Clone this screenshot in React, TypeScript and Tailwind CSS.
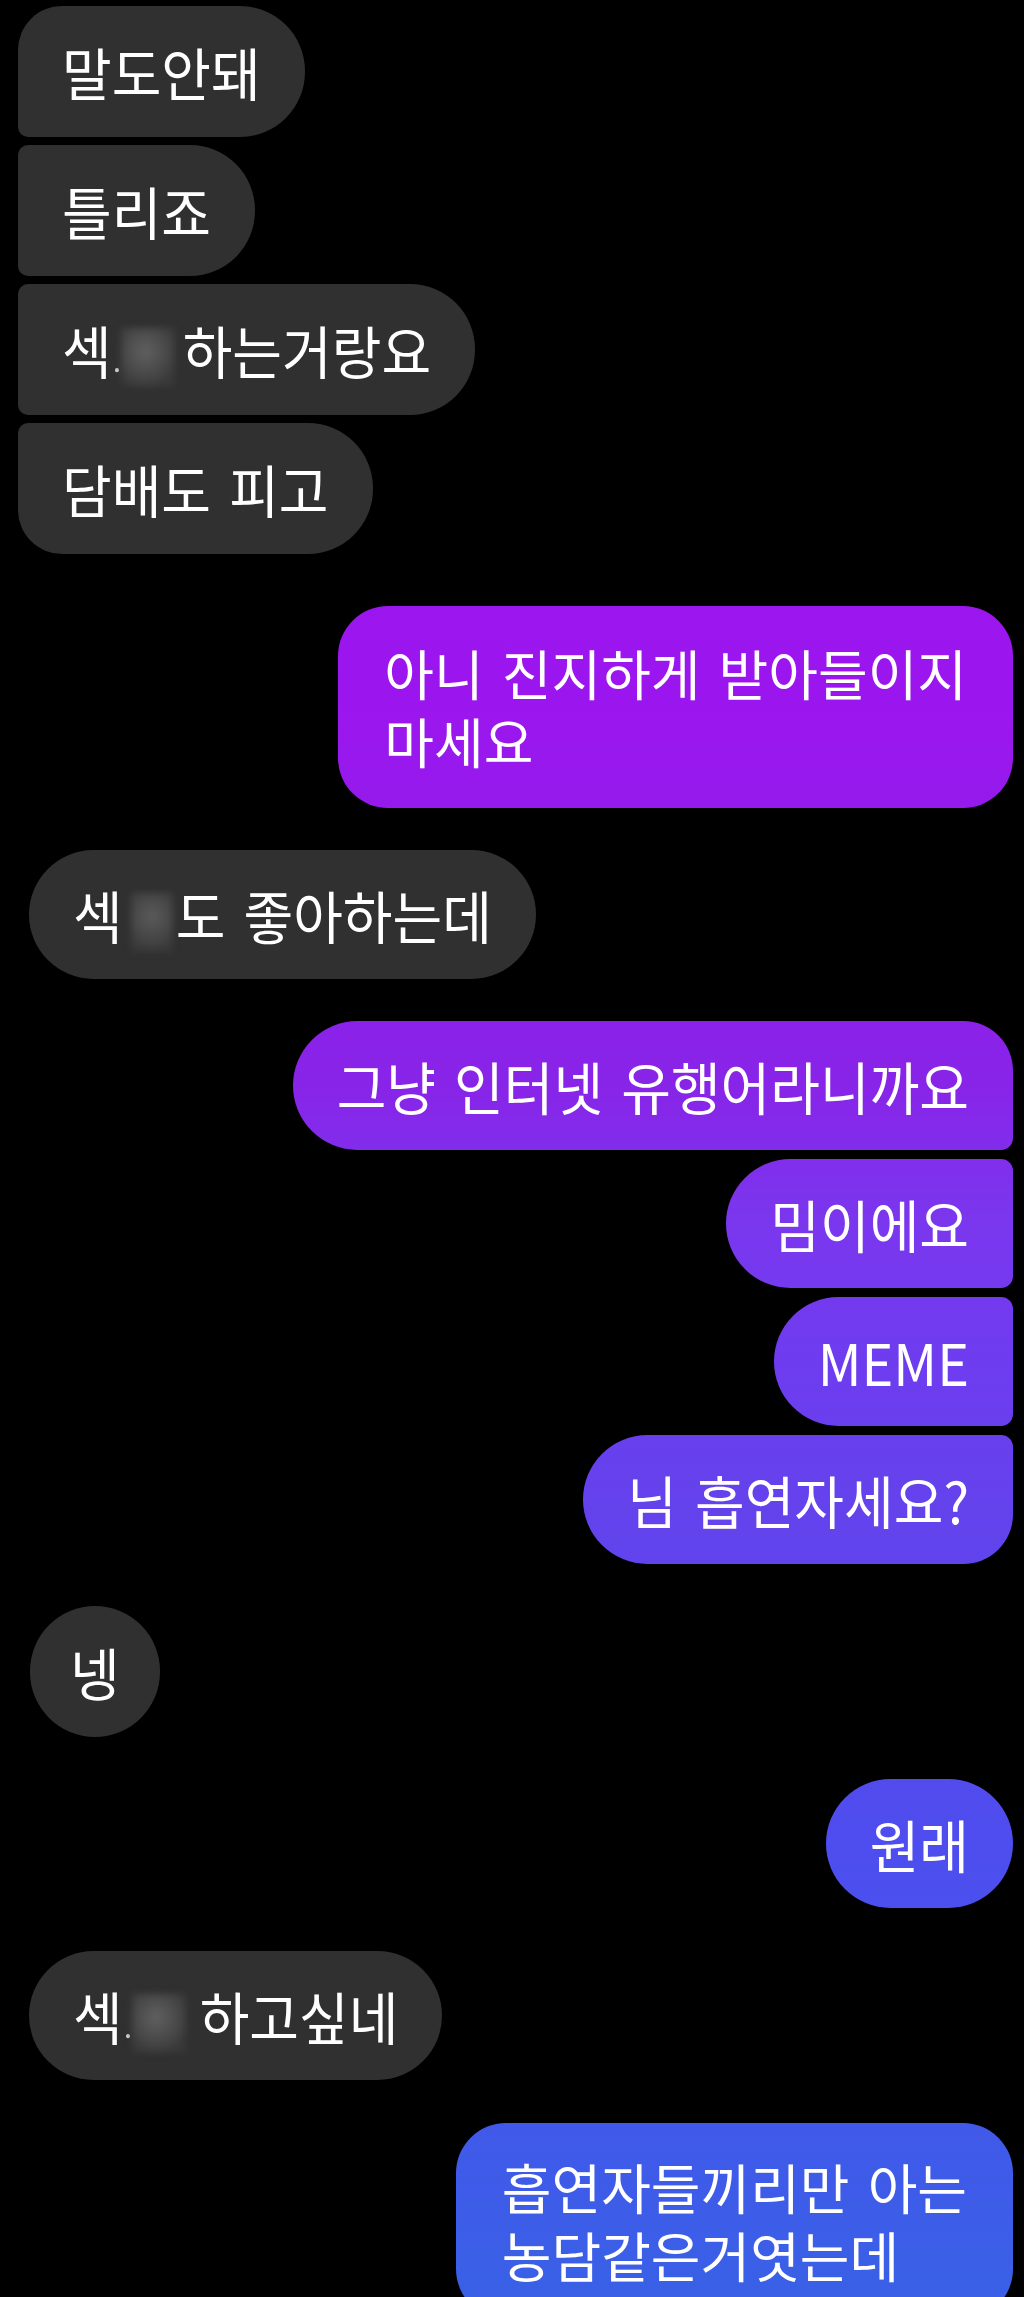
import React from "react";

const sent =
  "bg-fixed bg-[linear-gradient(180deg,#a012f0_0px,#9b16ee_700px,#8824e8_1085px,#7a37ee_1225px,#6e3cef_1360px,#6442ec_1500px,#4e4def_1842px,#3d5ce8_2200px,#3a60e7_2297px)]";

function Dot() {
  return <span className="inline-block w-[4px] h-[4px] ml-[3px] rounded-full bg-white/80 align-[2px]" />;
}

function BlurWide({ mr }: { mr: string }) {
  return (
    <span
      className={
        "inline-block align-[-8px] translate-y-[4px] w-[54px] h-[56px] ml-[2px] blur-[3px] bg-[radial-gradient(circle_at_45%_40%,#606060_0%,#4a4a4a_45%,#383838_80%)] " +
        mr
      }
    />
  );
}

function BlurNarrow() {
  return (
    <span className="inline-block align-[-8px] translate-y-[4px] w-[42px] h-[56px] ml-[8px] mr-[3px] blur-[3px] bg-[radial-gradient(circle_at_50%_40%,#5a5a5a_0%,#474747_50%,#383838_85%)]" />
  );
}

function T({ children }: { children: React.ReactNode }) {
  return <div className="block scale-y-[1.06] whitespace-nowrap">{children}</div>;
}

function T2({ children }: { children: React.ReactNode }) {
  return <div className="block whitespace-nowrap">{children}</div>;
}

export default function App() {
  return (
    <div className="w-[1024px] h-[2297px] overflow-hidden bg-black text-white font-['Noto_Sans_CJK_KR','Noto_Sans_CJK_SC',sans-serif] text-[54px] leading-[65px] [word-spacing:6px]">
      <div className="flex flex-col pl-[18px] pr-[11px] pt-[6px]">
        {/* received group */}
        <div className="self-start bg-[#303030] px-[44px] py-[33px] rounded-tl-[44px] rounded-bl-[10px] rounded-r-[65px]">
          <T>말도안돼</T>
        </div>
        <div className="self-start mt-[8px] bg-[#303030] px-[44px] py-[33px] rounded-l-[10px] rounded-r-[65px]">
          <T>틀리죠</T>
        </div>
        <div className="self-start mt-[8px] bg-[#303030] px-[44px] py-[33px] rounded-l-[10px] rounded-r-[65px]">
          <T>
            섹<Dot />
            <BlurWide mr="mr-[8px]" />
            하는거랑요
          </T>
        </div>
        <div className="self-start mt-[8px] bg-[#303030] px-[44px] py-[33px] rounded-tl-[10px] rounded-bl-[44px] rounded-r-[65px]">
          <T>담배도 피고</T>
        </div>

        {/* sent two-line */}
        <div className={"self-end mt-[52px] px-[46px] py-[33px] leading-[68px] rounded-[50px] " + sent}>
          <T2>
            아니 진지하게 받아들이지
            <br />
            마세요
          </T2>
        </div>

        {/* received */}
        <div className="self-start ml-[11px] mt-[42px] bg-[#303030] px-[44px] py-[32px] rounded-full">
          <T>
            섹<BlurNarrow />도 좋아하는데
          </T>
        </div>

        {/* sent group */}
        <div className={"self-end mt-[42px] px-[44px] py-[32px] rounded-l-[65px] rounded-tr-[50px] rounded-br-[12px] " + sent}>
          <T>그냥 인터넷 유행어라니까요</T>
        </div>
        <div className={"self-end mt-[9px] px-[44px] py-[32px] rounded-l-[65px] rounded-r-[12px] " + sent}>
          <T>밈이에요</T>
        </div>
        <div className={"self-end mt-[9px] px-[44px] py-[32px] rounded-l-[65px] rounded-r-[12px] " + sent}>
          <T>MEME</T>
        </div>
        <div className={"self-end mt-[9px] px-[44px] py-[32px] rounded-l-[65px] rounded-tr-[12px] rounded-br-[50px] " + sent}>
          <T>님 흡연자세요?</T>
        </div>

        {/* received */}
        <div className="self-start ml-[12px] mt-[42px] bg-[#303030] px-[40px] py-[33px] rounded-full">
          <T>넹</T>
        </div>

        {/* sent */}
        <div className={"self-end mt-[42px] px-[44px] py-[32px] rounded-full " + sent}>
          <T>원래</T>
        </div>

        {/* received */}
        <div className="self-start ml-[11px] mt-[43px] bg-[#303030] px-[44px] py-[32px] rounded-full">
          <T>
            섹<Dot />
            <BlurWide mr="mr-[14px]" />
            하고싶네
          </T>
        </div>

        {/* sent two-line */}
        <div className={"self-end mt-[43px] px-[46px] py-[30px] leading-[68px] rounded-[50px] " + sent}>
          <T2>
            흡연자들끼리만 아는
            <br />
            농담같은거엿는데
          </T2>
        </div>
      </div>
    </div>
  );
}
